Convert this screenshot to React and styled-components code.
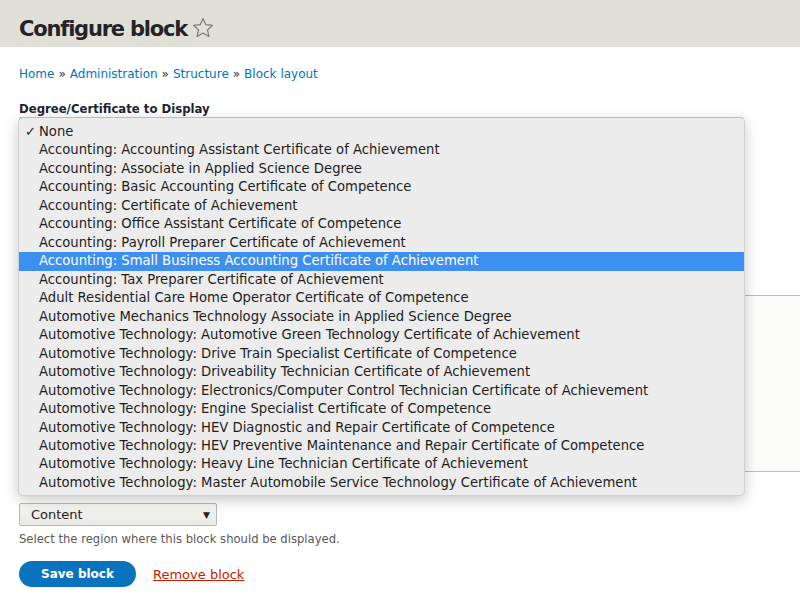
import React from "react"
import styled, { createGlobalStyle } from "styled-components"

const GlobalStyle = createGlobalStyle`
  html, body {
    margin: 0;
    padding: 0;
    background: #ffffff;
  }
  body {
    font-family: "DejaVu Sans", "Liberation Sans", sans-serif;
    color: #222330;
    overflow: hidden;
  }
`

const options = [
  "None",
  "Accounting: Accounting Assistant Certificate of Achievement",
  "Accounting: Associate in Applied Science Degree",
  "Accounting: Basic Accounting Certificate of Competence",
  "Accounting: Certificate of Achievement",
  "Accounting: Office Assistant Certificate of Competence",
  "Accounting: Payroll Preparer Certificate of Achievement",
  "Accounting: Small Business Accounting Certificate of Achievement",
  "Accounting: Tax Preparer Certificate of Achievement",
  "Adult Residential Care Home Operator Certificate of Competence",
  "Automotive Mechanics Technology Associate in Applied Science Degree",
  "Automotive Technology: Automotive Green Technology Certificate of Achievement",
  "Automotive Technology: Drive Train Specialist Certificate of Competence",
  "Automotive Technology: Driveability Technician Certificate of Achievement",
  "Automotive Technology: Electronics/Computer Control Technician Certificate of Achievement",
  "Automotive Technology: Engine Specialist Certificate of Competence",
  "Automotive Technology: HEV Diagnostic and Repair Certificate of Competence",
  "Automotive Technology: HEV Preventive Maintenance and Repair Certificate of Competence",
  "Automotive Technology: Heavy Line Technician Certificate of Achievement",
  "Automotive Technology: Master Automobile Service Technology Certificate of Achievement",
]

const Page = styled.div`
  position: relative;
  width: 800px;
  height: 612px;
  overflow: hidden;
`

const Header = styled.header`
  height: 47px;
  box-sizing: border-box;
  background: #e0e0d8;
  display: flex;
  align-items: flex-end;
  padding: 0 19px 6px;
  gap: 4px;
`

const Title = styled.h1`
  margin: 0;
  font-family: "DejaVu Sans", sans-serif;
  font-size: 21px;
  font-weight: bold;
  letter-spacing: -1.2px;
  color: #232429;
`

const Star = styled.svg`
  width: 24px;
  height: 24px;
  margin-bottom: 1px;
`

const Main = styled.main`
  padding: 0 0 0 19px;
`

const Breadcrumb = styled.nav`
  margin-top: 19px;
  font-size: 12px;
  line-height: 16px;
  color: #0074bd;
`

const Crumb = styled.a`
  color: #0074bd;
  text-decoration: none;
`

const Sep = styled.span`
  color: #333;
  margin: 0 4px;
`

const Label = styled.div`
  margin-top: 19px;
  font-size: 11.7px;
  font-weight: bold;
  line-height: 16px;
  color: #222330;
`

const WideSelect = styled.div`
  margin-top: 0;
  width: 722px;
  height: 26px;
  border: 1px solid #40b6ff;
  border-radius: 2px;
`

const TabsPanel = styled.div`
  margin-top: 150px;
  height: 175px;
  border-top: 1px solid #bbbbbb;
  border-bottom: 1px solid #bbbbbb;
  background: #fcfcfa;
`

const RegionLabel = styled(Label)`
  margin-top: 4px;
`

const RegionSelect = styled.div`
  margin-top: 11px;
  width: 198px;
  height: 23px;
  box-sizing: border-box;
  border: 1px solid #b8b8b8;
  border-radius: 2px;
  background: linear-gradient(#f6f6f3, #e8e8e4);
  display: flex;
  align-items: center;
  justify-content: space-between;
  padding: 0 6px 0 11px;
  font-size: 13px;
  color: #222;
`

const Arrow = styled.span`
  font-size: 9px;
  color: #222;
`

const Description = styled.div`
  margin-top: 6px;
  font-size: 11.6px;
  line-height: 14px;
  color: #595959;
`

const Actions = styled.div`
  margin-top: 15px;
  display: flex;
  align-items: center;
  gap: 17px;
`

const PrimaryButton = styled.button`
  width: 117px;
  height: 26px;
  border: none;
  border-radius: 13px;
  background: #0a73bf;
  color: #ffffff;
  font-family: "DejaVu Sans", sans-serif;
  font-weight: bold;
  font-size: 12px;
  padding: 0;
`

const DangerLink = styled.a`
  color: #c72100;
  font-size: 13px;
  text-decoration: underline;
`

const Popup = styled.div`
  position: absolute;
  left: 18px;
  top: 117px;
  width: 727px;
  height: 379px;
  box-sizing: border-box;
  padding: 5px 0;
  background: #ececec;
  border: 1px solid #d0d0d0;
  border-top-color: #9ec2e6;
  border-radius: 5px;
  box-shadow: 0 4px 14px rgba(0, 0, 0, 0.22);
`

const Option = styled.div`
  height: 18.47px;
  line-height: 18.47px;
  display: flex;
  font-size: 13.2px;
  white-space: nowrap;
  background: ${p => (p.$active ? "#3d8ff0" : "transparent")};
  color: ${p => (p.$active ? "#ffffff" : "#1d1d1d")};
`

const Check = styled.span`
  width: 14px;
  padding-left: 6px;
  font-size: 13px;
`

const App = () => (
  <Page>
    <GlobalStyle />
    <Header>
      <Title>Configure block</Title>
      <Star viewBox="0 0 24 24">
        <path
          d="M12 2.6l2.8 6.1 6.6.7-4.9 4.5 1.4 6.6L12 17.1l-5.9 3.4 1.4-6.6-4.9-4.5 6.6-.7z"
          fill="none"
          stroke="#777"
          strokeWidth="1.2"
          strokeLinejoin="round"
        />
      </Star>
    </Header>
    <Main>
      <Breadcrumb>
        <Crumb href="#">Home</Crumb>
        <Sep>»</Sep>
        <Crumb href="#">Administration</Crumb>
        <Sep>»</Sep>
        <Crumb href="#">Structure</Crumb>
        <Sep>»</Sep>
        <Crumb href="#">Block layout</Crumb>
      </Breadcrumb>
      <Label>Degree/Certificate to Display</Label>
      <WideSelect />
      <TabsPanel />
      <RegionLabel>Region</RegionLabel>
      <RegionSelect>
        Content
        <Arrow>▼</Arrow>
      </RegionSelect>
      <Description>Select the region where this block should be displayed.</Description>
      <Actions>
        <PrimaryButton>Save block</PrimaryButton>
        <DangerLink href="#">Remove block</DangerLink>
      </Actions>
    </Main>
    <Popup>
      {options.map((o, i) => (
        <Option key={o} $active={i === 7}>
          <Check>{i === 0 ? "✓" : ""}</Check>
          {o}
        </Option>
      ))}
    </Popup>
  </Page>
)

export default App
